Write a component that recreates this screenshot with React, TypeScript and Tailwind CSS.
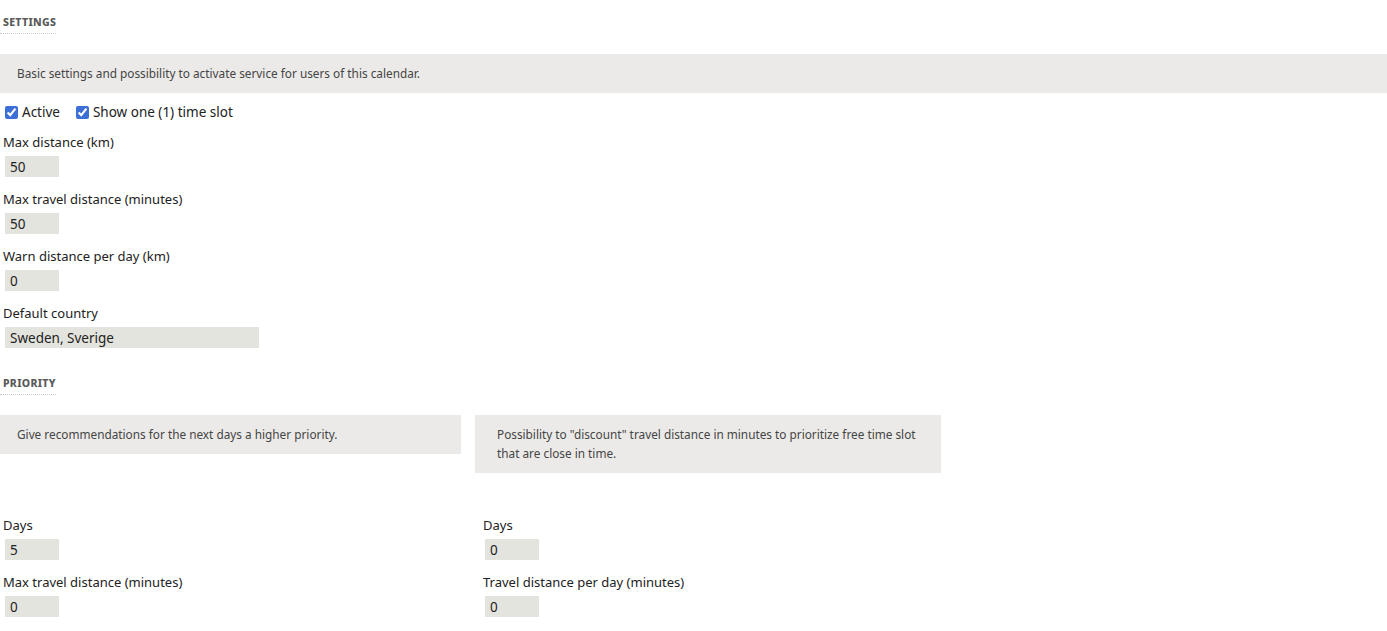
import React from "react";

const FONT = "font-['Noto_Sans',_'Open_Sans',_sans-serif]";

function SectionHeader({ title }: { title: string }) {
  return (
    <div className="pt-[16px]">
      <div className="w-fit border-b border-dotted border-[#c8c8c8] pb-[5px] pl-[3px] text-[10.5px] font-extrabold uppercase leading-[12px] tracking-[0.3px] text-[#5a5a5a]">
        {title}
      </div>
    </div>
  );
}

function Field({ label, value, wide }: { label: string; value: string; wide?: boolean }) {
  return (
    <div className="pb-[12px]">
      <div className="pl-[3px] text-[13px] leading-[20px] text-[#222]">{label}</div>
      <input
        readOnly
        value={value}
        className={`mt-[4px] ml-[5px] block h-[21px] bg-[#e4e4de] pl-[5px] text-[13.5px] text-[#222] outline-none ${
          wide ? "w-[254px]" : "w-[54px]"
        }`}
      />
    </div>
  );
}

export default function App() {
  return (
    <div className={`min-h-screen bg-white ${FONT}`}>
      <SectionHeader title="Settings" />

      <div className="mt-[20px] flex h-[39px] items-center bg-[#ebeae8] pl-[17px] text-[11.8px] text-[#454545]">
        Basic settings and possibility to activate service for users of this calendar.
      </div>

      <div className="mt-[9px] flex h-[20px] items-center text-[13.5px] text-[#222]">
        <label className="ml-[5px] flex items-center gap-[4px]">
          <input type="checkbox" defaultChecked className="m-0 h-[13px] w-[13px] accent-[#3c6fd6]" />
          Active
        </label>
        <label className="ml-[16px] flex items-center gap-[4px]">
          <input type="checkbox" defaultChecked className="m-0 h-[13px] w-[13px] accent-[#3c6fd6]" />
          Show one (1) time slot
        </label>
      </div>

      <div className="mt-[10px]">
        <Field label="Max distance (km)" value="50" />
        <Field label="Max travel distance (minutes)" value="50" />
        <Field label="Warn distance per day (km)" value="0" />
        <Field label="Default country" value="Sweden, Sverige" wide />
      </div>

      <div className="mt-[1px]">
        <SectionHeader title="Priority" />
      </div>

      <div className="mt-[20px] flex items-start gap-[14px] text-[11.8px] leading-[19px] text-[#454545]">
        <div className="w-[461px] bg-[#ebeae8] py-[10px] pl-[17px]">
          Give recommendations for the next days a higher priority.
        </div>
        <div className="w-[466px] bg-[#ebeae8] py-[10px] pl-[22px] pr-[16px]">
          Possibility to "discount" travel distance in minutes to prioritize free time slot
          <br />
          that are close in time.
        </div>
      </div>

      <div className="mt-[42px] flex">
        <div className="w-[480px]">
          <Field label="Days" value="5" />
          <Field label="Max travel distance (minutes)" value="0" />
        </div>
        <div className="w-[480px]">
          <Field label="Days" value="0" />
          <Field label="Travel distance per day (minutes)" value="0" />
        </div>
      </div>
    </div>
  );
}
